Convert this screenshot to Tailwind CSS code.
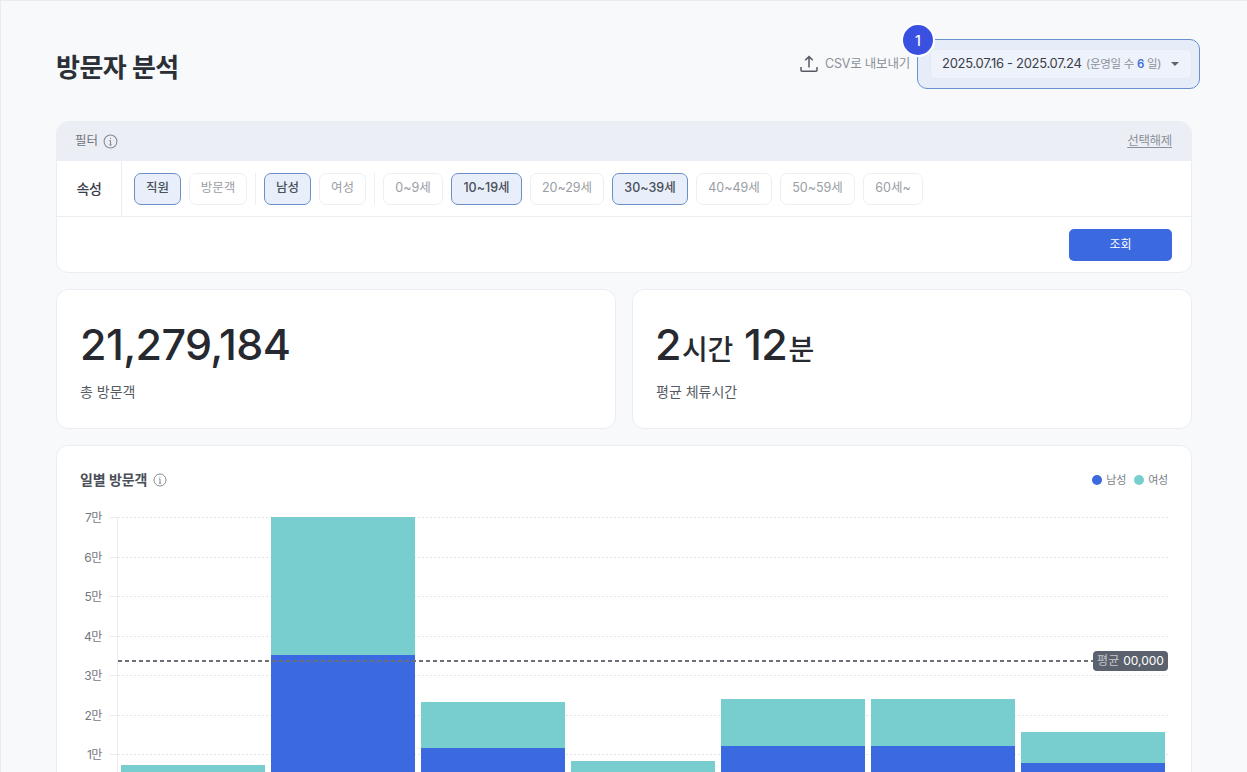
<!doctype html>
<html lang="ko">
  <head>
    <meta charset="UTF-8" />
    <script src="https://cdn.jsdelivr.net/npm/@tailwindcss/browser@4"></script>
    <title>방문자 분석</title>
  </head>
  <body class="h-[772px] overflow-hidden bg-[#f8f9fb] font-['Inter','Noto_Sans_CJK_KR',sans-serif] text-[#2b2f36]">
    <div class="h-[772px] overflow-hidden border-t border-l border-[#e9ebf0] px-[55px]">
      <!-- header -->
      <header class="flex h-[120px] items-start justify-between">
        <h1 class="mt-[48px] text-[26px] leading-[38px] font-bold tracking-[-0.5px]">방문자 분석</h1>
        <div class="mr-[-8px] flex items-start">
          <button class="mt-[52px] mr-[7px] flex h-[22px] items-center gap-[6px] text-[12.5px] tracking-[-0.2px] text-[#8b9098]">
            <svg class="h-[20px] w-[20px]" viewBox="0 0 20 20" fill="none" stroke="#565b63" stroke-width="1.5">
              <path d="M2 13v3.2c0 .6.4 1 1 1h14c.6 0 1-.4 1-1V13M10 13.5V2.8M6.2 6.3 10 2.6l3.8 3.7" />
            </svg>
            CSV로 내보내기
          </button>
          <div class="relative mt-[38px] flex h-[50px] w-[283px] items-center rounded-[10px] border-[1.5px] border-[#6a8fd2] bg-[#e6edf8] pr-[7px] pl-[12px]">
            <span class="absolute top-[-17px] left-[-17px] flex h-[34px] w-[34px] items-center justify-center rounded-full border-2 border-white bg-[#3a50e0] text-[14px] font-medium text-white">1</span>
            <div class="flex h-[30px] w-full items-center justify-between rounded-[5px] border border-[#e3e8f1] bg-[#eef2fa] pr-[12px] pl-[11px]">
              <span class="text-[13px] tracking-[-0.3px] text-[#3b4049]">2025.07.16 - 2025.07.24 <span class="ml-[1px] text-[11.5px] text-[#8b9098]">(운영일 수 <span class="font-semibold text-[#3f6fd8]">6</span> 일)</span></span>
              <span class="h-0 w-0 border-x-[4px] border-t-[4px] border-x-transparent border-t-[#5f646c]"></span>
            </div>
          </div>
        </div>
      </header>

      <!-- filter -->
      <section class="h-[152px] overflow-hidden rounded-[12px] border border-[#ebedf2] bg-white">
        <div class="flex h-[39px] items-center justify-between bg-[#eceef5] pr-[19px] pl-[18px]">
          <div class="flex items-center gap-[5px] text-[12.5px] text-[#6f747c]">
            필터
            <svg class="h-[15px] w-[15px]" viewBox="0 0 14 14" fill="none" stroke="#85898f" stroke-width="1">
              <circle cx="7" cy="7" r="6" />
              <path d="M7 6v4.2M5.8 10.2h2.4M5.9 6H7" />
              <circle cx="7" cy="4" r=".6" fill="#85898f" stroke="none" />
            </svg>
          </div>
          <a class="text-[12.5px] tracking-[-0.3px] text-[#8b9098] underline underline-offset-2">선택해제</a>
        </div>
        <div class="flex h-[56px] border-b border-[#ebedf2]">
          <div class="flex w-[65px] items-center justify-center border-r border-[#ebedf2] text-[14px] font-medium tracking-[-0.3px] text-[#3b4049]">속성</div>
          <div class="flex items-center gap-[8px] pl-[12px]">
            <span class="flex h-[32px] w-[47px] items-center justify-center rounded-[7px] border-[1.5px] border-[#6a8fc9] bg-[#e8effb] text-[12.5px] font-medium text-[#4a4f58]">직원</span>
            <span class="flex h-[32px] w-[58px] items-center justify-center rounded-[7px] border border-[#eeeff3] text-[12.5px] text-[#9a9ea5]">방문객</span>
            <span class="h-[32px] w-px bg-[#eeeff3]"></span>
            <span class="flex h-[32px] w-[47px] items-center justify-center rounded-[7px] border-[1.5px] border-[#6a8fc9] bg-[#e8effb] text-[12.5px] font-medium text-[#4a4f58]">남성</span>
            <span class="flex h-[32px] w-[47px] items-center justify-center rounded-[7px] border border-[#eeeff3] text-[12.5px] text-[#9a9ea5]">여성</span>
            <span class="h-[32px] w-px bg-[#eeeff3]"></span>
            <span class="flex h-[32px] w-[60px] items-center justify-center rounded-[7px] border border-[#eeeff3] text-[12.5px] text-[#9a9ea5]">0~9세</span>
            <span class="flex h-[32px] w-[71px] items-center justify-center rounded-[7px] border-[1.5px] border-[#6a8fc9] bg-[#e8effb] text-[12.5px] font-medium text-[#4a4f58]">10~19세</span>
            <span class="flex h-[32px] w-[74px] items-center justify-center rounded-[7px] border border-[#eeeff3] text-[12.5px] text-[#9a9ea5]">20~29세</span>
            <span class="flex h-[32px] w-[76px] items-center justify-center rounded-[7px] border-[1.5px] border-[#6a8fc9] bg-[#e8effb] text-[12.5px] font-medium text-[#4a4f58]">30~39세</span>
            <span class="flex h-[32px] w-[76px] items-center justify-center rounded-[7px] border border-[#eeeff3] text-[12.5px] text-[#9a9ea5]">40~49세</span>
            <span class="flex h-[32px] w-[75px] items-center justify-center rounded-[7px] border border-[#eeeff3] text-[12.5px] text-[#9a9ea5]">50~59세</span>
            <span class="flex h-[32px] w-[60px] items-center justify-center rounded-[7px] border border-[#eeeff3] text-[12.5px] text-[#9a9ea5]">60세~</span>
          </div>
        </div>
        <div class="flex justify-end pt-[12px] pr-[19px]">
          <button class="h-[32px] w-[103px] rounded-[5px] bg-[#3a69e0] text-[12px] text-white">조회</button>
        </div>
      </section>

      <!-- stats -->
      <div class="mt-[16px] grid h-[140px] grid-cols-2 gap-[16px]">
        <div class="rounded-[12px] border border-[#ebedf2] bg-white pt-[26px] pl-[23px]">
          <p class="text-[43px] leading-[56px] font-medium tracking-[-0.6px] text-[#26292f]">21,279,184</p>
          <p class="mt-[10px] text-[14px] leading-[20px] text-[#565b63]">총 방문객</p>
        </div>
        <div class="rounded-[12px] border border-[#ebedf2] bg-white pt-[26px] pl-[23px]">
          <p class="ml-[-1px] h-[56px] text-[43px] leading-[56px] font-medium tracking-[-0.4px] text-[#26292f]">2<span class="ml-[1px] text-[28px] leading-none">시간</span> 12<span class="ml-[1px] text-[28px] leading-none">분</span></p>
          <p class="mt-[10px] text-[14px] leading-[20px] text-[#565b63]">평균 체류시간</p>
        </div>
      </div>

      <!-- chart -->
      <section class="mt-[16px] h-[400px] rounded-[12px] border border-[#ebedf2] bg-white px-[23px]">
        <div class="flex h-[71px] items-start justify-between pt-[24px]">
          <div class="flex items-center gap-[6px] text-[14px] leading-[20px] font-semibold tracking-[-0.1px] text-[#4a4f58]">
            일별 방문객
            <svg class="h-[14px] w-[14px]" viewBox="0 0 14 14" fill="none" stroke="#85898f" stroke-width="1">
              <circle cx="7" cy="7" r="6" />
              <path d="M7 6v4.2M5.8 10.2h2.4M5.9 6H7" />
              <circle cx="7" cy="4" r=".6" fill="#85898f" stroke="none" />
            </svg>
          </div>
          <div class="flex items-center text-[11px] leading-[20px] tracking-[-0.2px] text-[#7b8088]">
            <span class="mr-[4px] ml-[-1px] h-[10px] w-[10px] rounded-full bg-[#3a69e0]"></span>남성
            <span class="mr-[4px] ml-[8px] h-[10px] w-[10px] rounded-full bg-[#78cdcf]"></span>여성
          </div>
        </div>
        <div class="flex">
          <div class="w-[37px]">
            <div class="flex h-[39.5px] items-start"><span class="mt-[-7px] w-[22px] text-right text-[12px] leading-[16px] tracking-[-0.4px] text-[#74787f]">7만</span><span class="ml-[8px] h-px w-[7px] bg-[#ebedf2]"></span></div>
            <div class="flex h-[39.5px] items-start"><span class="mt-[-7px] w-[22px] text-right text-[12px] leading-[16px] tracking-[-0.4px] text-[#74787f]">6만</span><span class="ml-[8px] h-px w-[7px] bg-[#ebedf2]"></span></div>
            <div class="flex h-[39.5px] items-start"><span class="mt-[-7px] w-[22px] text-right text-[12px] leading-[16px] tracking-[-0.4px] text-[#74787f]">5만</span><span class="ml-[8px] h-px w-[7px] bg-[#ebedf2]"></span></div>
            <div class="flex h-[39.5px] items-start"><span class="mt-[-7px] w-[22px] text-right text-[12px] leading-[16px] tracking-[-0.4px] text-[#74787f]">4만</span><span class="ml-[8px] h-px w-[7px] bg-[#ebedf2]"></span></div>
            <div class="flex h-[39.5px] items-start"><span class="mt-[-7px] w-[22px] text-right text-[12px] leading-[16px] tracking-[-0.4px] text-[#74787f]">3만</span><span class="ml-[8px] h-px w-[7px] bg-[#ebedf2]"></span></div>
            <div class="flex h-[39.5px] items-start"><span class="mt-[-7px] w-[22px] text-right text-[12px] leading-[16px] tracking-[-0.4px] text-[#74787f]">2만</span><span class="ml-[8px] h-px w-[7px] bg-[#ebedf2]"></span></div>
            <div class="flex h-[39.5px] items-start"><span class="mt-[-7px] w-[22px] text-right text-[12px] leading-[16px] tracking-[-0.4px] text-[#74787f]">1만</span><span class="ml-[8px] h-px w-[7px] bg-[#ebedf2]"></span></div>
          </div>
          <div class="relative h-[276.5px] flex-1 border-l-[1.5px] border-[#ebedf2]">
            <div class="absolute inset-0">
              <div class="h-[39.5px] bg-[repeating-linear-gradient(90deg,#e3e5ea_0_2px,transparent_2px_4px)] bg-[length:100%_1px] bg-no-repeat"></div>
              <div class="h-[39.5px] bg-[repeating-linear-gradient(90deg,#e3e5ea_0_2px,transparent_2px_4px)] bg-[length:100%_1px] bg-no-repeat"></div>
              <div class="h-[39.5px] bg-[repeating-linear-gradient(90deg,#e3e5ea_0_2px,transparent_2px_4px)] bg-[length:100%_1px] bg-no-repeat"></div>
              <div class="h-[39.5px] bg-[repeating-linear-gradient(90deg,#e3e5ea_0_2px,transparent_2px_4px)] bg-[length:100%_1px] bg-no-repeat"></div>
              <div class="h-[39.5px] bg-[repeating-linear-gradient(90deg,#e3e5ea_0_2px,transparent_2px_4px)] bg-[length:100%_1px] bg-no-repeat"></div>
              <div class="h-[39.5px] bg-[repeating-linear-gradient(90deg,#e3e5ea_0_2px,transparent_2px_4px)] bg-[length:100%_1px] bg-no-repeat"></div>
              <div class="h-[39.5px] bg-[repeating-linear-gradient(90deg,#e3e5ea_0_2px,transparent_2px_4px)] bg-[length:100%_1px] bg-no-repeat"></div>
            </div>
            <div class="relative flex h-full items-end gap-[6px] pr-[3px] pl-[3px]">
              <div class="flex flex-1 flex-col"><div class="h-[14px] bg-[#78cdcf]"></div><div class="h-[14.5px] bg-[#3a69e0]"></div></div>
              <div class="flex flex-1 flex-col"><div class="h-[138px] bg-[#78cdcf]"></div><div class="h-[138.5px] bg-[#3a69e0]"></div></div>
              <div class="flex flex-1 flex-col"><div class="h-[46px] bg-[#78cdcf]"></div><div class="h-[45.5px] bg-[#3a69e0]"></div></div>
              <div class="flex flex-1 flex-col"><div class="h-[16px] bg-[#78cdcf]"></div><div class="h-[16.5px] bg-[#3a69e0]"></div></div>
              <div class="flex flex-1 flex-col"><div class="h-[47px] bg-[#78cdcf]"></div><div class="h-[47.5px] bg-[#3a69e0]"></div></div>
              <div class="flex flex-1 flex-col"><div class="h-[47px] bg-[#78cdcf]"></div><div class="h-[47.5px] bg-[#3a69e0]"></div></div>
              <div class="flex flex-1 flex-col"><div class="h-[31px] bg-[#78cdcf]"></div><div class="h-[30.5px] bg-[#3a69e0]"></div></div>
            </div>
            <div class="absolute top-[134px] right-0 left-0 flex h-[20px] items-center">
              <div class="h-[1.5px] flex-1 bg-[repeating-linear-gradient(90deg,#6b7078_0_4px,transparent_4px_7px)]"></div>
              <span class="flex h-[20px] w-[75px] items-center justify-center rounded-[4px] bg-[#5b626d] text-[12px] text-white"><span class="mr-[4px] text-[#c3c7cd]">평균</span>00,000</span>
            </div>
          </div>
        </div>
      </section>
    </div>
  </body>
</html>
